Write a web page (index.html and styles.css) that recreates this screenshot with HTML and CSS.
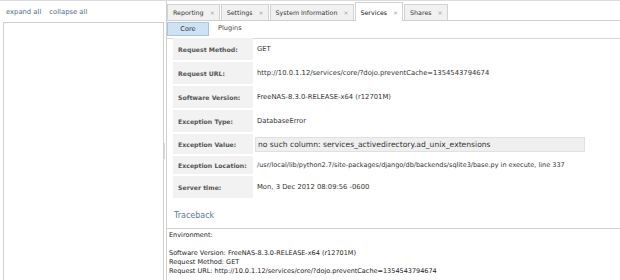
FILE: index.html
```html
<!DOCTYPE html>
<html lang="en">
<head>
  <meta charset="UTF-8">
  <title>FreeNAS - Services</title>
  <link rel="stylesheet" href="styles.css">
</head>
<body>
  <div class="left-pane">
    <div class="tree-links">
      <a href="#">expand all</a>
      <a href="#">collapse all</a>
    </div>
    <div class="tree-box"></div>
  </div>
  <div class="splitter"><span class="grip"></span></div>
  <div class="right-pane">
    <div class="tab-strip">
      <div class="tab">Reporting <span class="close">&#215;</span></div>
      <div class="tab">Settings <span class="close">&#215;</span></div>
      <div class="tab">System Information <span class="close">&#215;</span></div>
      <div class="tab selected">Services <span class="close">&#215;</span></div>
      <div class="tab">Shares <span class="close">&#215;</span></div>
    </div>
    <div class="subtab-strip">
      <div class="subtab active">Core</div>
      <div class="subtab">Plugins</div>
    </div>
    <div class="summary">
      <div class="row">
        <div class="label">Request Method:</div>
        <div class="value">GET</div>
      </div>
      <div class="row">
        <div class="label">Request URL:</div>
        <div class="value">http://10.0.1.12/services/core/?dojo.preventCache=1354543794674</div>
      </div>
      <div class="row">
        <div class="label">Software Version:</div>
        <div class="value">FreeNAS-8.3.0-RELEASE-x64 (r12701M)</div>
      </div>
      <div class="row">
        <div class="label">Exception Type:</div>
        <div class="value">DatabaseError</div>
      </div>
      <div class="row row-value">
        <div class="label">Exception Value:</div>
        <div class="value"><pre class="exc-value">no such column: services_activedirectory.ad_unix_extensions</pre></div>
      </div>
      <div class="row row-short">
        <div class="label">Exception Location:</div>
        <div class="value location">/usr/local/lib/python2.7/site-packages/django/db/backends/sqlite3/base.py in execute, line 337</div>
      </div>
      <div class="row">
        <div class="label">Server time:</div>
        <div class="value">Mon, 3 Dec 2012 08:09:56 -0600</div>
      </div>
    </div>
    <div class="traceback-title">Traceback</div>
    <div class="traceback">
      <div>Environment:</div>
      <br>
      <div>Software Version: FreeNAS-8.3.0-RELEASE-x64 (r12701M)</div>
      <div>Request Method: GET</div>
      <div>Request URL: http://10.0.1.12/services/core/?dojo.preventCache=1354543794674</div>
    </div>
  </div>
</body>
</html>
```

FILE: styles.css
```css
html, body {
  height: 100%;
}
body {
  margin: 0;
  border-top: 1px solid #dcdcdc;
  box-sizing: border-box;
  display: flex;
  font-family: 'DejaVu Sans', Verdana, sans-serif;
  font-size: 6.6px;
  color: #333;
  background: #fff;
  overflow: hidden;
}
a {
  color: #4e6a8e;
  text-decoration: none;
}
.left-pane {
  width: 164px;
  display: flex;
  flex-direction: column;
}
.tree-links {
  height: 21px;
  padding-left: 6px;
  display: flex;
  align-items: center;
  gap: 8px;
  font-size: 6.8px;
}
.tree-box {
  flex: 1;
  margin-left: 3px;
  border: 1px solid #d0d0d0;
  border-bottom: none;
}
.splitter {
  width: 2px;
  position: relative;
}
.grip {
  position: absolute;
  left: 0;
  top: 142px;
  width: 1px;
  height: 16px;
  background: #d8d8d8;
}
.right-pane {
  flex: 1;
  border-left: 1px solid #d0d0d0;
  display: flex;
  flex-direction: column;
}
.tab-strip {
  height: 19px;
  display: flex;
  align-items: flex-end;
  gap: 1px;
  border-bottom: 1px solid #cfcfcf;
}
.tab {
  height: 15px;
  line-height: 15px;
  padding: 0 4px 0 5px;
  background: #f1f1f1;
  border: 1px solid #d2d2d2;
  border-bottom: none;
  color: #333;
  white-space: nowrap;
  font-size: 6.3px;
}
.tab .close {
  margin-left: 4px;
  color: #999;
  font-size: 6px;
}
.tab.selected {
  height: 18px;
  line-height: 20px;
  background: #fff;
  margin-bottom: -1px;
  color: #111;
}
.subtab-strip {
  height: 16px;
  display: flex;
  align-items: flex-start;
  padding-top: 1px;
  border-bottom: 1px solid #d6d6d6;
}
.subtab {
  height: 12px;
  line-height: 12px;
  padding: 0 9px;
  color: #444;
}
.subtab.active {
  width: 24px;
  padding: 0 8px;
  text-align: center;
  background: #cde2f5;
  border: 1px solid #a9c5e0;
  color: #333;
}
.summary {
  display: flex;
  flex-direction: column;
  gap: 2px;
  padding: 0 0 0 6px;
  margin-top: -1px;
}
.row {
  height: 22px;
  display: flex;
}
.row-value {
  height: 20px;
}
.row-short {
  height: 18px;
}
.label {
  width: 75px;
  padding-left: 5px;
  background: #f2f2f2;
  font-weight: bold;
  font-size: 6.2px;
  color: #555;
  display: flex;
  align-items: center;
}
.value {
  padding-left: 4px;
  display: flex;
  align-items: center;
  white-space: nowrap;
  font-size: 6.8px;
}
.value.location {
  font-size: 6.5px;
}
.exc-value {
  margin: 0 0 0 -2px;
  width: 326px;
  height: 13px;
  line-height: 13px;
  padding-left: 2px;
  background: #efefef;
  border: 1px solid #e0e0e0;
  font-family: 'DejaVu Sans', Verdana, sans-serif;
  font-size: 7.6px;
  color: #333;
}
.traceback-title {
  height: 30px;
  line-height: 35px;
  padding-left: 7px;
  font-size: 8px;
  color: #5878a0;
  border-bottom: 1px solid #d0d0d0;
}
.traceback {
  flex: 1;
  padding: 2px 0 0 2px;
  font-size: 6.5px;
  line-height: 9px;
  color: #222;
}
```
